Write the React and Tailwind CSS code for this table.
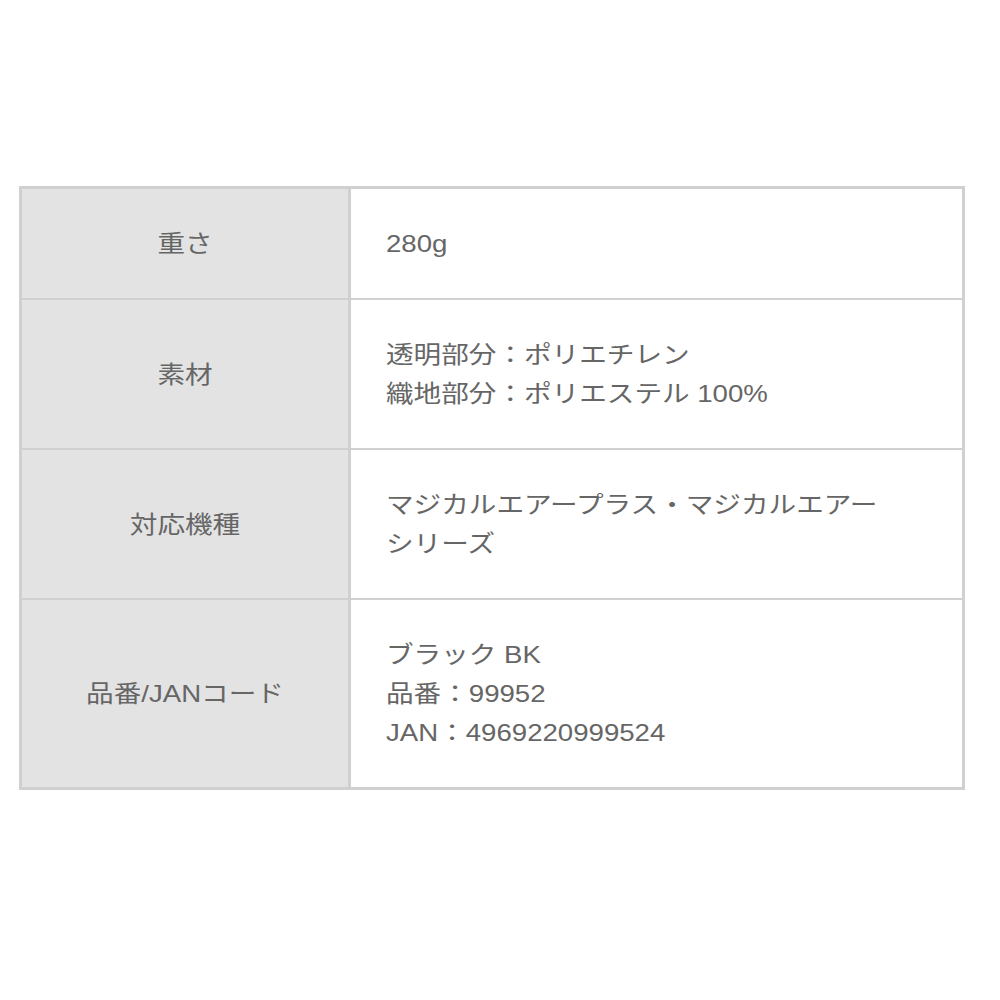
import React from "react";

const rows = [
    { label: "重さ", lines: ["280g"] },
    { label: "素材", lines: ["透明部分：ポリエチレン", "織地部分：ポリエステル 100%"] },
    { label: "対応機種", lines: ["マジカルエアープラス・マジカルエアー", "シリーズ"] },
    { label: "品番/JANコード", lines: ["ブラック BK", "品番：99952", "JAN：4969220999524"] },
];

const App = () => {
    return (
        <div
            className="min-h-screen bg-white pt-[186px] pl-[19px]"
            style={{ fontFamily: '"Liberation Sans", "Noto Sans CJK JP", sans-serif' }}
        >
            <div className="w-[946px] border-[3px] border-[#d0d0d0] text-[24px] leading-[39px] text-[#666666]">
                {rows.map((row, i) => (
                    <div
                        key={row.label}
                        className={"grid grid-cols-[329px_1fr] " + (i > 0 ? "border-t-2 border-[#d0d0d0]" : "")}
                    >
                        <div className="flex items-center justify-center bg-[#e3e3e3] border-r-[3px] border-[#d0d0d0]">
                            <span className="inline-block scale-x-[1.15]">{row.label}</span>
                        </div>
                        <div className="py-[35px] pl-[35px] pr-4">
                            {row.lines.map((line) => (
                                <div key={line} className="origin-left scale-x-[1.15] whitespace-nowrap">{line}</div>
                            ))}
                        </div>
                    </div>
                ))}
            </div>
        </div>
    );
};

export default App;
